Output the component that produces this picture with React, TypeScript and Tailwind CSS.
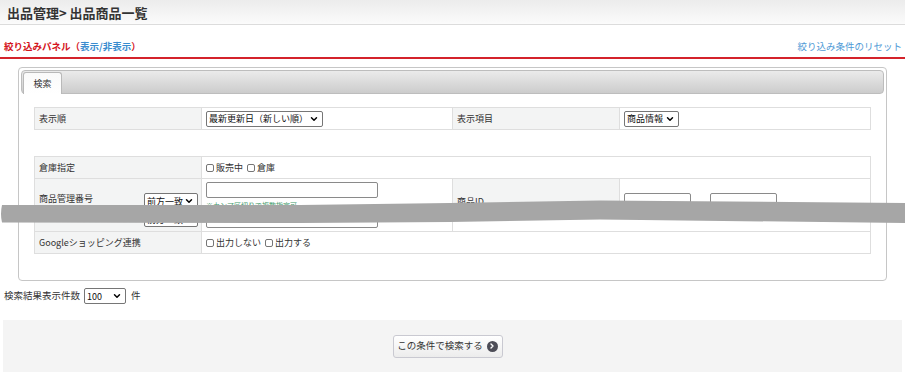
import { ChevronDown, ChevronRight } from 'lucide-react';

function FakeSelect({ label, width }: { label: string; width: string }) {
  return (
    <div
      className={`${width} h-[16px] flex items-center justify-between border border-[#767676] rounded-[2px] bg-white pl-[2px] pr-[3px] text-[9px] leading-none text-[#111]`}
    >
      <span className="whitespace-nowrap">{label}</span>
      <ChevronDown size={10} strokeWidth={3.5} className="text-black shrink-0" />
    </div>
  );
}

function Check({ label }: { label: string }) {
  return (
    <span className="inline-flex items-center gap-[2px] mr-[4px]">
      <span className="w-[8px] h-[8px] border border-[#767676] rounded-[2px] bg-white" />
      <span>{label}</span>
    </span>
  );
}

function TextBox({ width }: { width: string }) {
  return <div className={`${width} h-[16px] border border-[#8a8a8a] rounded-[2px] bg-white`} />;
}

const labelCell = 'bg-[#f3f4f4] border-r border-b border-[#dedede] pl-[4px] flex items-center';
const valueCell = 'bg-white border-r border-b border-[#dedede] pl-[4px] flex items-center';

export default function App() {
  return (
    <div className="relative w-[905px] h-[376px] overflow-hidden bg-white text-[#333] font-['Meiryo','Noto_Sans_CJK_JP',sans-serif]">
      {/* page title */}
      <div className="h-[25px] bg-gradient-to-b from-[#ececec] to-[#fbfbfb] border-b border-[#dcdcdc] pl-[7px] flex items-center">
        <h1 className="text-[13px] font-bold text-[#333] leading-none">出品管理&gt; 出品商品一覧</h1>
      </div>

      {/* filter heading */}
      <div className="mt-[14px] flex items-center justify-between pl-[4px] pr-[3px] pb-[4px] h-[14px] box-content border-b-2 border-[#d4232b] text-[9.5px] leading-[14px]">
        <div className="font-bold text-[#d4141c]">
          絞り込みパネル<span>（</span>
          <span className="text-[#3a8ccf]">表示/非表示</span>
          <span>）</span>
        </div>
        <div className="text-[#4f9ad6]">絞り込み条件のリセット</div>
      </div>

      {/* panel */}
      <div className="mt-[8px] mx-[18px] border border-[#c6c6c6] rounded-[4px] p-[2px] pb-[26px]">
        <div className="h-[24px] border border-[#bdbdbd] rounded-[4px] bg-gradient-to-b from-[#ebebeb] to-[#cccccc] flex items-end pl-[1px]">
          <div className="-mb-px h-[22px] w-[39px] border border-b-0 border-[#b9b9b9] rounded-t-[3px] bg-gradient-to-b from-[#fafafa] to-white text-[9px] flex items-start justify-center pt-[4px]">
            検索
          </div>
        </div>

        <div className="px-[13px] pt-[13px] text-[9px] leading-none">
          <div className="grid grid-cols-[167px_251px_167px_251px] border-l border-t border-[#dedede]">
            <div className={`${labelCell} h-[22px]`}>表示順</div>
            <div className={valueCell}>
              <FakeSelect label="最新更新日（新しい順）" width="w-[117px]" />
            </div>
            <div className={labelCell}>表示項目</div>
            <div className={valueCell}>
              <FakeSelect label="商品情報" width="w-[55px]" />
            </div>
          </div>

          <div className="mt-[26px] grid grid-cols-[167px_251px_167px_251px] border-l border-t border-[#dedede]">
            <div className={`${labelCell} h-[22px]`}>倉庫指定</div>
            <div className={`${valueCell} col-span-3`}>
              <Check label="販売中" />
              <Check label="倉庫" />
            </div>

            <div className={`${labelCell} h-[31px] justify-between pr-[3px] items-start pt-[15px]`}>
              <span>商品管理番号</span>
              <div className="-mt-[1px]">
                <FakeSelect label="前方一致" width="w-[54px]" />
              </div>
            </div>
            <div className="bg-white border-r border-[#dedede] pl-[4px] pt-[3px]">
              <TextBox width="w-[172px]" />
              <div className="mt-[4px] text-[7px] text-[#3f9a6a] leading-none">※カンマ区切りで複数指定可</div>
            </div>
            <div className={`${labelCell} items-start pt-[18px]`}>商品ID</div>
            <div className="bg-white border-r border-b border-[#dedede] pl-[4px] pt-[14px] flex items-start gap-[5px]">
              <TextBox width="w-[67px]" />
              <span className="pt-[7px]">〜</span>
              <TextBox width="w-[67px]" />
            </div>

            <div className="bg-[#f3f4f4] border-r border-b border-[#dedede] h-[22px] flex items-start justify-end pr-[3px] pt-[1px]">
              <FakeSelect label="前方一致" width="w-[54px]" />
            </div>
            <div className="bg-white border-r border-b border-[#dedede] pl-[4px] pt-[2px]">
              <TextBox width="w-[172px]" />
            </div>
            <div className="col-span-2 bg-white border-r border-b border-[#dedede]" />

            <div className={`${labelCell} h-[22px]`}>Googleショッピング連携</div>
            <div className={`${valueCell} col-span-3`}>
              <Check label="出力しない" />
              <Check label="出力する" />
            </div>
          </div>
        </div>
      </div>

      {/* result count */}
      <div className="mt-[7px] pl-[4px] h-[16px] flex items-center gap-[4px] text-[9.5px] leading-none">
        <span>検索結果表示件数</span>
        <FakeSelect label="100" width="w-[42px]" />
        <span className="ml-[1px]">件</span>
      </div>

      {/* search button area */}
      <div className="mt-[16px] mx-[3px] h-[52px] bg-[#f4f4f4] flex items-center justify-center">
        <button className="h-[23px] w-[110px] -ml-[10px] flex items-center justify-center gap-[4px] border border-[#c9c9d1] rounded-[3px] bg-gradient-to-b from-white to-[#ececec] text-[9.5px] text-[#333] leading-none">
          <span>この条件で検索する</span>
          <span className="w-[11px] h-[11px] rounded-full bg-[#4d4d57] flex items-center justify-center">
            <ChevronRight size={8} strokeWidth={4} className="text-white" />
          </span>
        </button>
      </div>

      {/* torn screenshot band */}
      <svg className="absolute left-0 top-0 pointer-events-none" width="905" height="376">
        <path
          d="M2 205 L300 205 L450 203 L600 200.5 L905 203 L905 223 L600 219.5 L450 222 L300 223 L2 222.5 Q0 214 2 205 Z"
          fill="#a6a6a6"
        />
      </svg>
    </div>
  );
}
